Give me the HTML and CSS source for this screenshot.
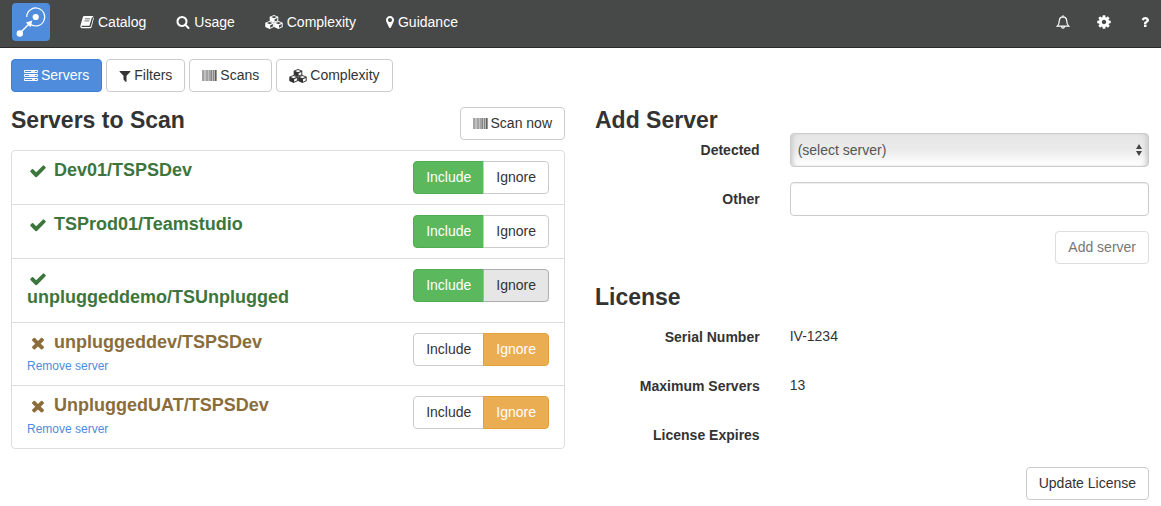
FILE: index.html
```html
<!DOCTYPE html>
<html lang="en">
<head>
<meta charset="utf-8">
<title>Servers to Scan</title>
<link rel="stylesheet" href="styles.css">
</head>
<body>
<svg class="sprite" aria-hidden="true">
  <symbol id="book" viewBox="0 0 14 14"><path fill-rule="evenodd" d="M4.300 1h8.100q1.100.1.900 1.200L11 11q-.3 1-1.200 1H2.200q-.9 0-.8-.8.1-.7.8-.7h7.100L12 2l1.300.8q.6.300.4 1L11.600 12q-.4 1.200-1.700 1.200H1.800Q.4 13.100.3 11.700q0-.7.2-1.300L2.900 2Q3.300 1 4.300 1z"/><path d="M4.300 1h7.500L9.300 10.500H1.200L3.600 2z"/><path fill="none" stroke="#474948" stroke-width=".8" d="M5 3.800h5M4.400 5.900h5"/></symbol>
  <symbol id="search" viewBox="0 0 1792 1792"><path d="M1216 832q0-185-131.500-316.500t-316.500-131.500-316.500 131.500-131.500 316.500 131.500 316.500 316.500 131.500 316.500-131.500 131.500-316.500zm512 832q0 52-38 90t-90 38q-54 0-90-38l-343-342q-179 124-399 124-143 0-273.500-55.500t-225-150-150-225-55.500-273.500 55.500-273.500 150-225 225-150 273.500-55.500 273.500 55.500 225 150 150 225 55.500 273.500q0 220-124 399l343 343q37 37 37 90z"/></symbol>
  <symbol id="cubes" viewBox="0 0 18 14"><g id="cube"><path fill-rule="evenodd" d="M9 0l4.300 1.700v4.200L9 7.800 4.700 5.900V1.700zM6.200 2L9 3.200 11.800 2 9 .9zM9.600 4.200v2.400l2.700-1.200V3z"/></g><use href="#cube" x="-4.400" y="6.100"/><use href="#cube" x="4.400" y="6.100"/></symbol>
  <symbol id="marker" viewBox="384 0 1024 1792"><path d="M1152 640q0-106-75-181t-181-75-181 75-75 181 75 181 181 75 181-75 75-181zm256 0q0 109-33 179l-364 774q-16 33-47.500 52t-67.500 19-67.500-19-46.500-52l-365-774q-33-70-33-179 0-212 150-362t362-150 362 150 150 362z"/></symbol>
  <symbol id="bell" viewBox="0 0 14 14"><path fill="none" stroke="currentColor" stroke-width="1.200" d="M7 .3v1.200M1.200 11.200Q3.200 9.600 3.300 5.800 3.500 1.900 7 1.800q3.500.1 3.700 4 .1 3.800 2.100 5.400zM5.600 11.700Q5.800 13.200 7 13.200t1.400-1.500"/></symbol>
  <symbol id="cog" viewBox="100 100 1592 1592"><path d="M1152 896q0-106-75-181t-181-75-181 75-75 181 75 181 181 75 181-75 75-181zm512-109v222q0 12-8 23t-20 13l-185 28q-19 54-39 91 35 50 107 138 10 12 10 25t-9 23q-27 37-99 108t-94 71q-12 0-26-9l-138-108q-44 23-91 38-16 136-29 186-7 28-36 28h-222q-14 0-24.500-8.500t-11.500-21.500l-28-184q-49-16-90-37l-141 107q-10 9-25 9-14 0-25-11-126-114-165-168-7-10-7-23 0-12 8-23 15-21 51-66.500t54-70.500q-27-50-41-99l-183-27q-13-2-21-12.500t-8-23.500v-222q0-12 8-23t19-13l186-28q14-46 39-92-40-57-107-138-10-12-10-24 0-10 9-23 26-36 98.500-107.500t94.500-71.500q13 0 26 10l138 107q44-23 91-38 16-136 29-186 7-28 36-28h222q14 0 24.500 8.500t11.500 21.500l28 184q49 16 90 37l142-107q9-9 24-9 13 0 25 10 129 119 165 170 7 8 7 22 0 12-8 23-15 21-51 66.500t-54 70.500q26 50 41 98l183 28q13 2 21 12.500t8 23.500z"/></symbol>
  <symbol id="question" viewBox="0 0 1792 1792"><path d="M1088 1256v240q0 16-12 28t-28 12h-240q-16 0-28-12t-12-28v-240q0-16 12-28t28-12h240q16 0 28 12t12 28zm316-600q0 54-15.500 101t-35 76.500-55 59.500-57.500 43.500-61 35.500q-41 23-68.500 65t-27.500 67q0 17-12 32.500t-28 15.500h-240q-15 0-25.500-18.500t-10.500-37.500v-45q0-83 65-156.500t143-108.500q59-27 84-56t25-76q0-42-46.500-74t-107.500-32q-65 0-108 29-35 25-107 115-13 16-31 16-12 0-25-8l-164-125q-13-10-15.500-25t5.500-28q160-266 464-266 80 0 161 31t146 83 106 127.500 41 158.500z"/></symbol>
  <symbol id="servers" viewBox="0 0 14 14"><path fill="none" stroke="currentColor" d="M.5 1.500h13v2H.5zm0 4h13v2H.5zm0 4h13v2H.5z"/><path d="M7 1h4v3H7zM5 5h6v3H5zM8 9h3v3H8z" opacity=".8"/></symbol>
  <symbol id="filter" viewBox="192 0 1408 1792"><path d="M1595 295q17 41-14 70l-493 493v742q0 42-39 59-13 5-25 5-27 0-45-19l-256-256q-19-19-19-45v-486l-493-493q-31-29-14-70 17-39 59-39h1280q42 0 59 39z"/></symbol>
  <symbol id="barcode" viewBox="0 0 15 14"><path opacity=".45" d="M0 1h2v11H0zM4 1h2v11H4zM7 1h2v11H7z"/><path opacity=".3" d="M2 1h2v11H2zM6 1h1v11H6zM10 1h1v11h-1z"/><path opacity=".6" d="M9 1h1v11H9zM11 1h1v11h-1z"/><path opacity=".35" d="M12 1h1v11h-1z"/><path opacity=".8" d="M13 1h1v11h-1z"/><path opacity=".5" d="M14 1h1v11h-1z"/></symbol>
  <symbol id="check" viewBox="0 0 1792 1792"><path d="M1671 566q0 40-28 68l-724 724-136 136q-28 28-68 28t-68-28l-136-136-362-362q-28-28-28-68t28-68l136-136q28-28 68-28t68 28l294 295 656-657q28-28 68-28t68 28l136 136q28 28 28 68z"/></symbol>
  <symbol id="times" viewBox="0 0 1792 1792"><path d="M1490 1322q0 40-28 68l-136 136q-28 28-68 28t-68-28l-294-294-294 294q-28 28-68 28t-68-28l-136-136q-28-28-28-68t28-68l294-294-294-294q-28-28-28-68t28-68l136-136q28-28 68-28t68 28l294 294 294-294q28-28 68-28t68 28l136 136q28 28 28 68t-28 68l-294 294 294 294q28 28 28 68z"/></symbol>
</svg>

<header class="navbar">
  <a class="brand" href="#" aria-label="Home">
    <svg viewBox="0 0 38 38"><g fill="none" stroke="#fff"><path stroke-width="1.200" d="M17.700 20.700A9 9 0 1 0 14.700 14"/><path stroke-width="1.500" d="M8 30l9-9"/></g><g fill="#fff"><circle cx="23.700" cy="14" r="3.100"/><circle cx="7.800" cy="30.500" r="3.200"/><path d="M20.300 17.600l-1.700 6.700-2.300-2.200-2.400-2.500z"/></g></svg>
  </a>
  <nav class="main-nav">
    <a href="#"><svg class="icon"><use href="#book"/></svg>Catalog</a>
    <a href="#"><svg class="icon"><use href="#search"/></svg>Usage</a>
    <a href="#"><svg class="icon wide"><use href="#cubes"/></svg>Complexity</a>
    <a href="#"><svg class="icon thin"><use href="#marker"/></svg>Guidance</a>
  </nav>
  <nav class="tools">
    <a href="#" aria-label="Notifications"><svg class="icon"><use href="#bell"/></svg></a>
    <a href="#" aria-label="Settings"><svg class="icon"><use href="#cog"/></svg></a>
    <a href="#" aria-label="Help"><svg class="icon"><use href="#question"/></svg></a>
  </nav>
</header>

<main class="page">
  <nav class="tabs">
    <a class="btn primary" href="#"><svg class="icon"><use href="#servers"/></svg>Servers</a>
    <a class="btn" href="#"><svg class="icon narrow"><use href="#filter"/></svg>Filters</a>
    <a class="btn" href="#"><svg class="icon bars"><use href="#barcode"/></svg>Scans</a>
    <a class="btn" href="#"><svg class="icon wide"><use href="#cubes"/></svg>Complexity</a>
  </nav>

  <div class="columns">
    <section>
      <div class="section-head">
        <h3>Servers to Scan</h3>
        <button class="btn" type="button"><svg class="icon bars"><use href="#barcode"/></svg>Scan now</button>
      </div>
      <ul class="servers">
        <li>
          <div class="server included"><h4><svg class="mark"><use href="#check"/></svg> Dev01/TSPSDev</h4></div>
          <div class="toggle"><button class="btn success" type="button">Include</button><button class="btn" type="button">Ignore</button></div>
        </li>
        <li>
          <div class="server included"><h4><svg class="mark"><use href="#check"/></svg> TSProd01/Teamstudio</h4></div>
          <div class="toggle"><button class="btn success" type="button">Include</button><button class="btn" type="button">Ignore</button></div>
        </li>
        <li>
          <div class="server included"><h4><svg class="mark"><use href="#check"/></svg> unpluggeddemo/TSUnplugged</h4></div>
          <div class="toggle"><button class="btn success" type="button">Include</button><button class="btn hovered" type="button">Ignore</button></div>
        </li>
        <li>
          <div class="server ignored"><h4><svg class="mark"><use href="#times"/></svg> unpluggeddev/TSPSDev</h4><a href="#">Remove server</a></div>
          <div class="toggle"><button class="btn" type="button">Include</button><button class="btn warning" type="button">Ignore</button></div>
        </li>
        <li>
          <div class="server ignored"><h4><svg class="mark"><use href="#times"/></svg> UnpluggedUAT/TSPSDev</h4><a href="#">Remove server</a></div>
          <div class="toggle"><button class="btn" type="button">Include</button><button class="btn warning" type="button">Ignore</button></div>
        </li>
      </ul>
    </section>

    <section>
      <h3>Add Server</h3>
      <form class="form">
        <div class="row">
          <label for="detected">Detected</label>
          <div class="select-wrap">
            <select id="detected" class="control"><option>(select server)</option></select>
            <svg class="arrows" viewBox="0 0 6 12"><path d="M3 0l3 5H0zM0 7h6l-3 5z"/></svg>
          </div>
        </div>
        <div class="row">
          <label for="other">Other</label>
          <input id="other" class="control" type="text">
        </div>
        <div class="actions"><button class="btn" type="button" disabled>Add server</button></div>
      </form>
      <h3 class="license-title">License</h3>
      <dl class="form">
        <div class="row"><dt>Serial Number</dt><dd>IV-1234</dd></div>
        <div class="row"><dt>Maximum Servers</dt><dd>13</dd></div>
        <div class="row"><dt>License Expires</dt><dd></dd></div>
      </dl>
      <div class="actions license-actions"><button class="btn" type="button">Update License</button></div>
    </section>
  </div>
</main>
</body>
</html>
```

FILE: styles.css
```css
* { box-sizing: border-box; }

body {
  margin: 0;
  background: #fff;
  color: #333;
  font: 14px/20px "Liberation Sans", Arial, sans-serif;
}

a { color: #4f8cdc; text-decoration: none; }
.sprite { position: absolute; width: 0; height: 0; }

.icon { width: 14px; height: 14px; flex: none; fill: currentColor; }
.icon.wide { width: 18px; }
.icon.thin { width: 8px; }
.icon.narrow { width: 12px; }
.icon.bars { width: 15px; }

.navbar {
  display: flex;
  align-items: flex-start;
  height: 48px;
  padding: 3px 9px 0 12px;
  background: #474948;
  border-bottom: 1px solid #2b2b2b;
}
.brand {
  width: 38px;
  height: 38px;
  border-radius: 4px;
  background: #4f8cdc;
}
.brand svg { display: block; width: 100%; }
.main-nav { display: flex; gap: 30px; margin-left: 30px; padding-top: 9px; }
.main-nav a { display: flex; align-items: center; gap: 4px; color: #fff; }
.tools { display: flex; gap: 27px; margin-left: auto; padding-top: 9px; }
.tools a { display: flex; align-items: center; height: 20px; color: #fff; }

.page { padding: 11px 12px 0 11px; }
.tabs { display: flex; gap: 4px; }

.btn {
  display: inline-flex;
  align-items: center;
  gap: 3px;
  padding: 6px 12px;
  border: 1px solid #ccc;
  border-radius: 4px;
  background: #fff;
  color: #333;
  font: inherit;
  line-height: 19px;
  white-space: nowrap;
}
.btn.primary { background: #4f8cdc; border-color: #397edb; color: #fff; }
.btn.success { background: #5cb85c; border-color: #4cae4c; color: #fff; }
.btn.warning { background: #ebad52; border-color: #e5a03a; color: #fff; }
.btn.hovered { background: #e6e6e6; border-color: #adadad; }
.btn:disabled { border-color: #ddd; color: #777; }

.columns {
  display: grid;
  grid-template-columns: 1fr 1fr;
  gap: 30px;
  margin-top: 15px;
}
h3 { margin: 0; font-size: 23px; line-height: 26px; }
.section-head {
  display: flex;
  justify-content: space-between;
  align-items: flex-start;
  margin-bottom: 10px;
}

.servers {
  margin: 0;
  padding: 0;
  list-style: none;
  border: 1px solid #ddd;
  border-radius: 4px;
}
.servers li {
  display: flex;
  justify-content: space-between;
  align-items: flex-start;
  gap: 30px;
  padding: 10px 15px;
}
.servers li + li { border-top: 1px solid #ddd; }
.server { flex: 0 1 270px; }
.server h4 { margin: 0 0 5px; font-size: 18px; line-height: 19px; }
.server a { display: block; font-size: 12px; line-height: 18px; }
.mark {
  width: 18px;
  height: 18px;
  margin: 0 2px;
  vertical-align: bottom;
  fill: currentColor;
}
.included { color: #3c763d; }
.ignored { color: #8a6d3b; }

.toggle { display: flex; }
.toggle .btn:first-child { border-radius: 4px 0 0 4px; }
.toggle .btn:last-child { margin-left: -1px; border-radius: 0 4px 4px 0; }

.form { display: grid; gap: 15px; margin: 0; }
.row { display: grid; grid-template-columns: 11fr 24fr; column-gap: 30px; min-height: 34px; }
label, dt { padding-top: 7px; font-weight: bold; text-align: right; }
dd { margin: 0; padding-top: 6px; }

.control {
  width: 100%;
  height: 34px;
  padding: 6px 7px;
  border: 1px solid #ccc;
  border-radius: 4px;
  background: #fff;
  box-shadow: inset 0 1px 1px #eee;
  color: #555;
  font: inherit;
}
select.control {
  appearance: none;
  background: linear-gradient(#e6e6e6, #ebebeb 50%, #fff);
  box-shadow: inset 4px 0 4px -2px #ccc, inset -4px 0 4px -2px #ccc;
}
.select-wrap { position: relative; }
.arrows {
  position: absolute;
  top: 11px;
  right: 7px;
  width: 6px;
  height: 12px;
  fill: #444;
  pointer-events: none;
}
.actions { display: flex; justify-content: flex-end; }
.license-title { margin: 20px 0 10px; }
.license-actions { margin-top: 15px; }
```
